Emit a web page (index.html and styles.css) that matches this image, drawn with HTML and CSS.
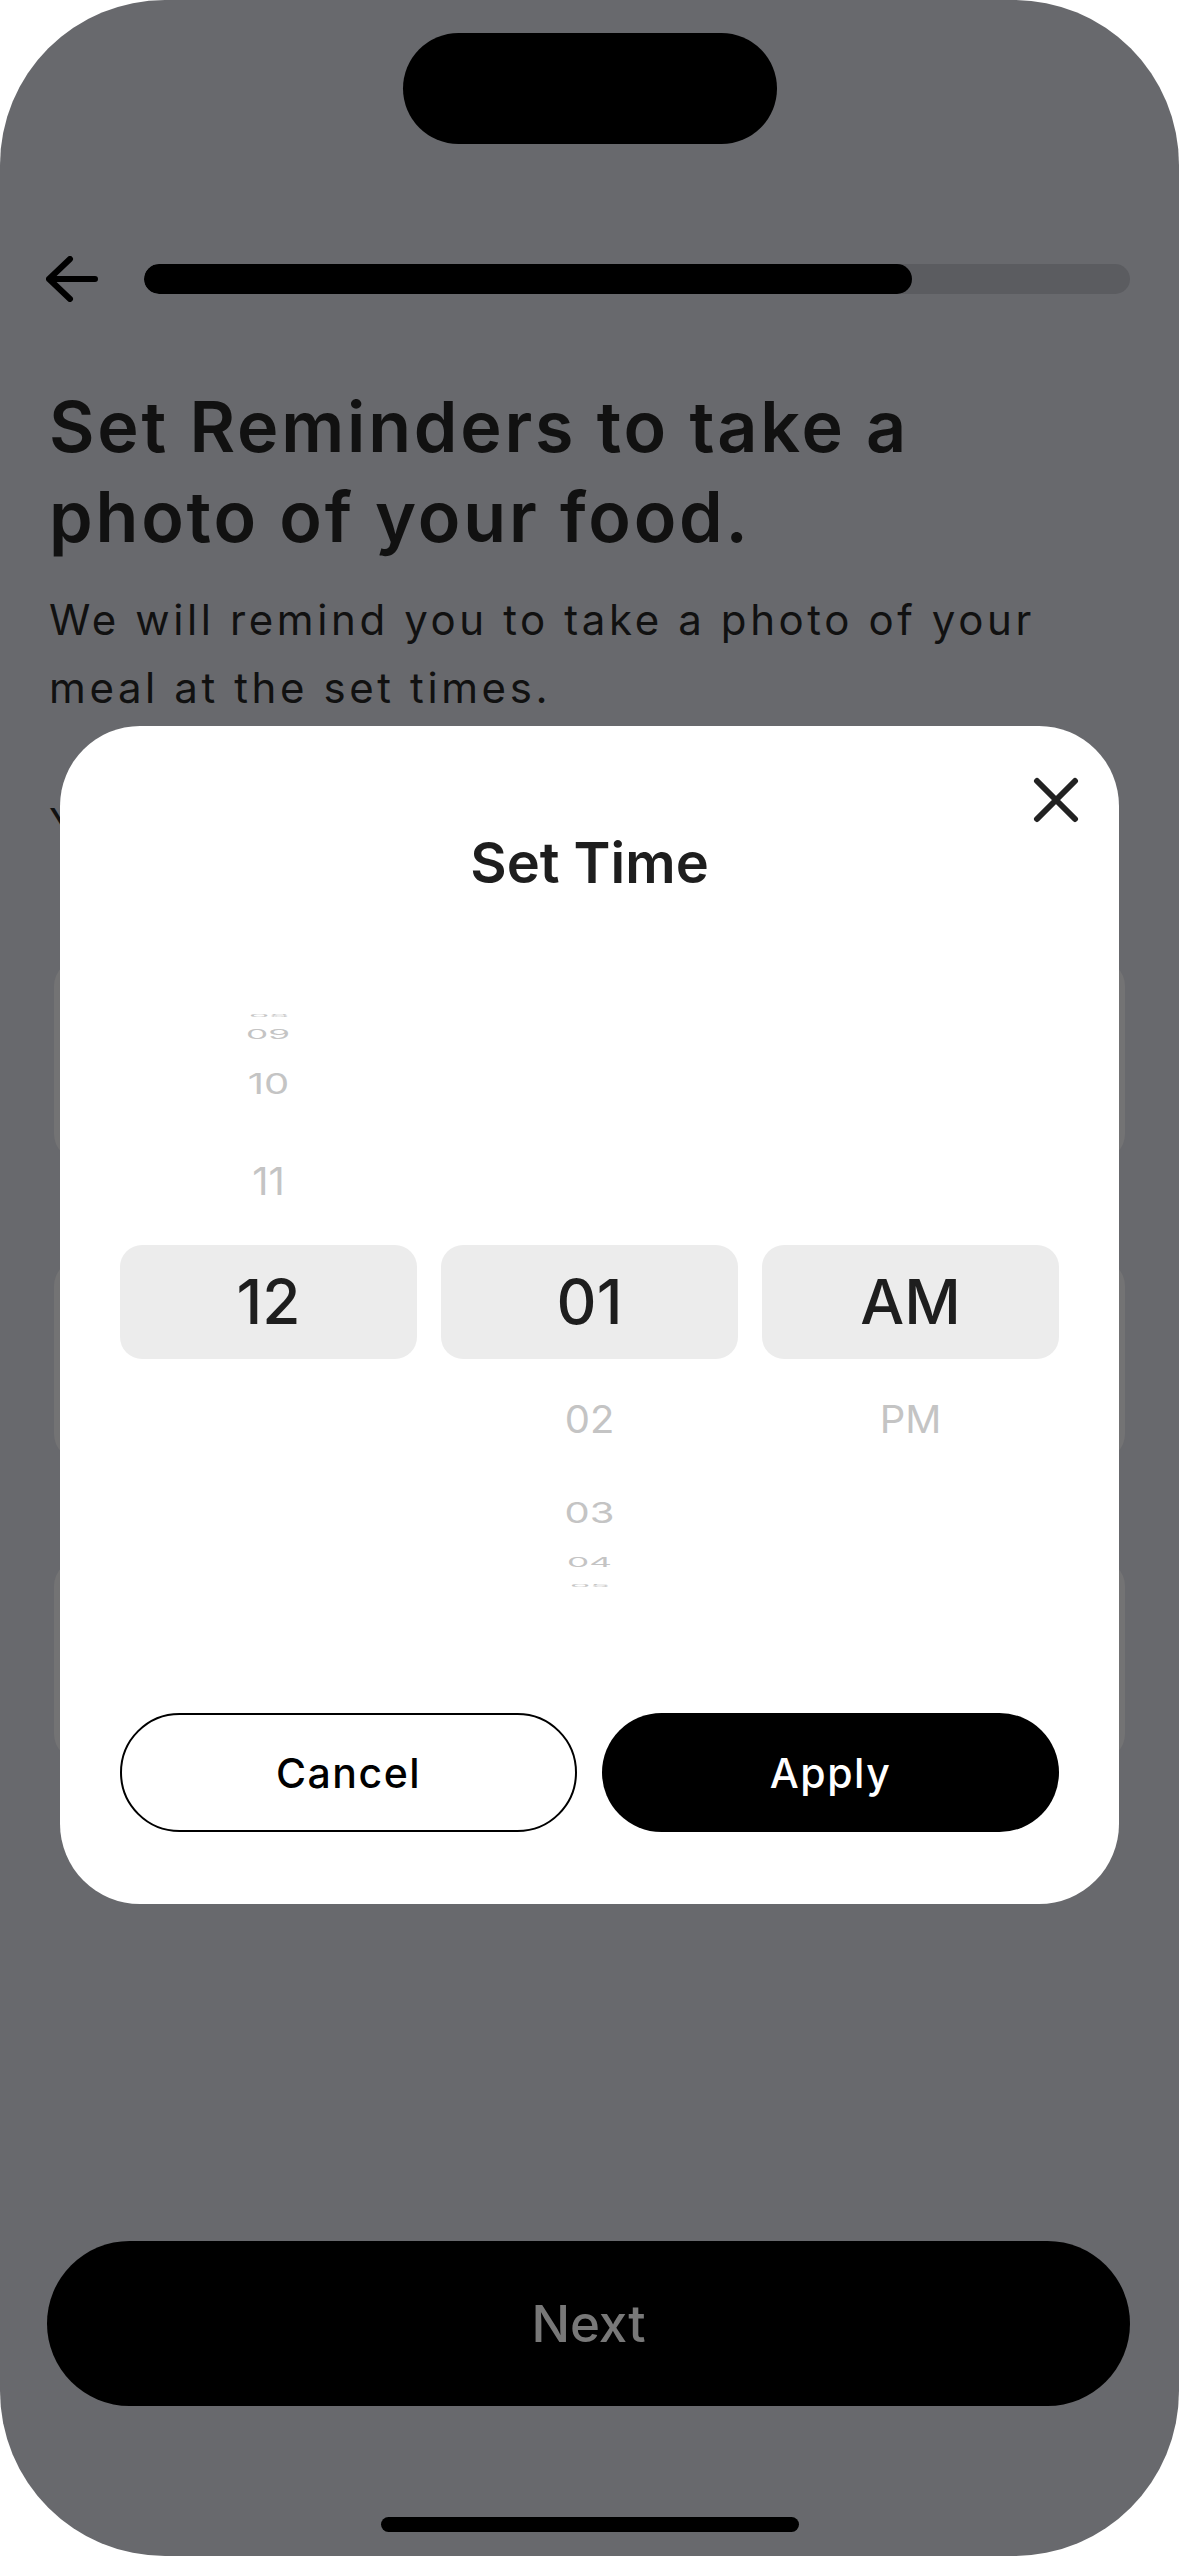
FILE: index.html
```html
<!DOCTYPE html>
<html lang="en">
<head>
<meta charset="utf-8">
<title>Set Time</title>
<link rel="stylesheet" href="styles.css">
</head>
<body>
<div class="phone">
  <div class="island"></div>
  <div class="header">
    <svg class="back" width="52" height="46" viewBox="0 0 52 46">
      <path d="M24 3 L3 23 L24 43 M3 23 L49 23" fill="none" stroke="#000" stroke-width="6" stroke-linecap="round" stroke-linejoin="round"/>
    </svg>
    <div class="track"><div class="fill" style="width:77.9%"></div></div>
  </div>
  <h1 class="title">Set Reminders to take a photo of your food.</h1>
  <p class="subtitle">We will remind you to take a photo of your meal at the set times.</p>
  <div class="label">Your reminders</div>
  <div class="cards">
    <div class="card"></div>
    <div class="card"></div>
    <div class="card"></div>
  </div>
  <button class="next">Next</button>
  <div class="home"></div>

  <div class="modal">
    <div class="close-row">
      <svg class="close" width="46" height="46" viewBox="0 0 46 46">
        <path d="M4 4 L42 42 M42 4 L4 42" fill="none" stroke="#222" stroke-width="6" stroke-linecap="round"/>
      </svg>
    </div>
    <h2 class="modal-title">Set Time</h2>
    <div class="picker">
      <div class="col">
        <div class="slot u4"><span class="w s4">08</span></div>
        <div class="slot u3"><span class="w s3">09</span></div>
        <div class="slot u2"><span class="w s2">10</span></div>
        <div class="slot u1"><span class="w s1">11</span></div>
        <div class="slot sel"><span class="sv">12</span></div>
        <div class="slot d1"></div>
        <div class="slot d2"></div>
        <div class="slot d3"></div>
        <div class="slot d4"></div>
      </div>
      <div class="col">
        <div class="slot u4"></div>
        <div class="slot u3"></div>
        <div class="slot u2"></div>
        <div class="slot u1"></div>
        <div class="slot sel"><span class="sv">01</span></div>
        <div class="slot d1"><span class="w s1">02</span></div>
        <div class="slot d2"><span class="w s2">03</span></div>
        <div class="slot d3"><span class="w s3">04</span></div>
        <div class="slot d4"><span class="w s4">05</span></div>
      </div>
      <div class="col">
        <div class="slot u4"></div>
        <div class="slot u3"></div>
        <div class="slot u2"></div>
        <div class="slot u1"></div>
        <div class="slot sel"><span class="sv">AM</span></div>
        <div class="slot d1"><span class="w s1">PM</span></div>
        <div class="slot d2"></div>
        <div class="slot d3"></div>
        <div class="slot d4"></div>
      </div>
    </div>
    <div class="actions">
      <button class="btn cancel">Cancel</button>
      <button class="btn apply">Apply</button>
    </div>
  </div>
</div>
</body>
</html>
```
FILE: styles.css
```css
* { box-sizing: border-box; }
html, body { margin: 0; padding: 0; background: #ffffff; }
body { font-family: "Inter", "Noto Sans", sans-serif; }

.phone {
  position: relative;
  width: 1179px;
  height: 2556px;
  background: #68696d;
  border-radius: 165px;
  overflow: hidden;
  display: flex;
  flex-direction: column;
  padding-bottom: 24px;
}

.island {
  width: 374px;
  height: 111px;
  margin: 33px auto 0;
  background: #000;
  border-radius: 56px;
  flex-shrink: 0;
}

.header {
  display: flex;
  align-items: center;
  gap: 46px;
  height: 46px;
  margin-top: 112px;
  padding: 0 49px 0 46px;
}
.back { flex-shrink: 0; display: block; }
.track {
  flex: 1;
  height: 30px;
  border-radius: 15px;
  background: #5b5c60;
  overflow: hidden;
}
.fill { height: 100%; background: #000; border-radius: 15px; }

.title {
  margin: 80px 0 0;
  padding: 0 200px 0 49px;
  font-size: 70px;
  line-height: 90px;
  font-weight: 600;
  color: #111;
  letter-spacing: 2.8px;
}
.subtitle {
  margin: 24px 0 0;
  padding: 0 130px 0 49px;
  font-size: 42px;
  line-height: 68px;
  font-weight: 400;
  color: #111;
  letter-spacing: 3.6px;
}
.label {
  margin-top: 67px;
  padding-left: 49px;
  font-size: 41px;
  line-height: 68px;
  color: #111;
}
.cards {
  margin: 103px 54px 0 54px;
  display: flex;
  flex-direction: column;
  gap: 100px;
}
.card {
  height: 200px;
  border-radius: 26px;
  background: #737374;
}

.next {
  margin: auto 49px 0 47px;
  height: 165px;
  border: 0;
  border-radius: 83px;
  background: #000;
  color: #787878;
  font-family: inherit;
  font-size: 51px;
  font-weight: 500;
  flex-shrink: 0;
}
.home {
  width: 418px;
  height: 15px;
  margin: 111px auto 0;
  border-radius: 8px;
  background: #000;
  flex-shrink: 0;
}

/* modal overlay */
.modal {
  position: absolute;
  top: 726px;
  left: 60px;
  width: 1059px;
  height: 1178px;
  background: #fff;
  border-radius: 80px;
  padding: 51px 60px 72px;
  display: flex;
  flex-direction: column;
}
.close-row {
  display: flex;
  justify-content: flex-end;
  margin-right: -20px;
  height: 46px;
}
.close { display: block; }
.modal-title {
  margin: 8px 0 0;
  text-align: center;
  font-size: 56px;
  line-height: 64px;
  font-weight: 600;
  color: #1e1e1e;
}

.picker {
  margin-top: 115px;
  display: grid;
  grid-template-columns: repeat(3, 1fr);
  gap: 24px;
}
.col { display: flex; flex-direction: column; }
.slot {
  display: flex;
  align-items: center;
  justify-content: center;
}
.u4 { height: 11px; }
.u3 { height: 28px; }
.u2 { height: 70px; }
.u1 { height: 126px; }
.sel { height: 114px; background: #ececec; border-radius: 22px; }
.d1 { height: 122px; }
.d2 { height: 64px; }
.d3 { height: 36px; }
.d4 { height: 10px; }

.w {
  display: inline-block;
  font-size: 40px;
  line-height: 1;
  font-weight: 400;
  color: #c4c4c4;
}
.s1 { transform: scaleY(0.95); }
.s2 { transform: scaleY(0.72); }
.s3 { transform: scale(0.88, 0.32); }
.s4 { transform: scale(0.8, 0.08); }
.sv {
  font-size: 62px;
  line-height: 1;
  font-weight: 500;
  color: #1e1e1e;
}

.actions {
  margin-top: 122px;
  display: grid;
  grid-template-columns: 1fr 1fr;
  gap: 25px;
}
.btn {
  height: 119px;
  border-radius: 60px;
  font-family: inherit;
  font-size: 41px;
  font-weight: 500;
  letter-spacing: 1.5px;
}
.cancel { background: #fff; color: #000; border: 2.5px solid #000; }
.apply { background: #000; color: #fff; border: 0; }
```
